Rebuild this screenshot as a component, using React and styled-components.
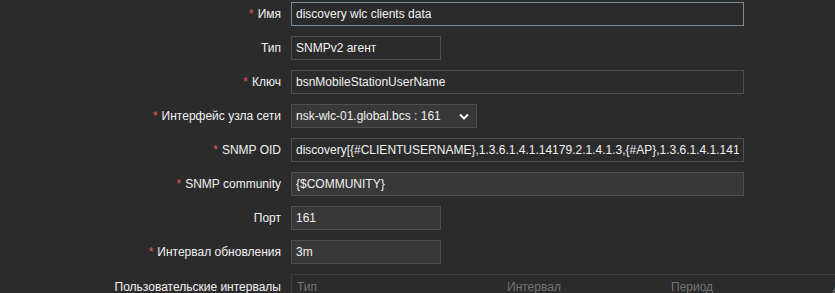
import styled, { createGlobalStyle } from "styled-components";

const fields = [
  { label: "Имя", required: true, value: "discovery wlc clients data", wide: true, focused: true, readOnly: true },
  { label: "Тип", value: "SNMPv2 агент", readOnly: true },
  { label: "Ключ", required: true, value: "bsnMobileStationUserName", wide: true, readOnly: true },
  { label: "Интерфейс узла сети", required: true, select: "nsk-wlc-01.global.bcs : 161" },
  {
    label: "SNMP OID",
    required: true,
    wide: true,
    readOnly: true,
    value:
      "discovery[{#CLIENTUSERNAME},1.3.6.1.4.1.14179.2.1.4.1.3,{#AP},1.3.6.1.4.1.14179.2.1.4.1.4]",
  },
  { label: "SNMP community", required: true, value: "{$COMMUNITY}", wide: true },
  { label: "Порт", value: "161" },
  { label: "Интервал обновления", required: true, value: "3m" },
];

const App = () => {
  return (
    <>
      <GlobalStyle />
      <Form>
        {fields.map(({ label, required, value, wide, focused, readOnly, select }) => (
          <Row key={label}>
            <Label>
              {required && <Star>*</Star>}
              {label}
            </Label>
            <Field>
              {select ? (
                <SelectBox>
                  <span>{select}</span>
                  <svg width="10" height="7" viewBox="0 0 10 7">
                    <polyline points="1,1.5 5,5.5 9,1.5" fill="none" stroke="#f2f2f2" strokeWidth="2" />
                  </svg>
                </SelectBox>
              ) : (
                <TextInput
                  value={value}
                  readOnly
                  $wide={wide}
                  $focused={focused}
                  $readOnly={readOnly}
                />
              )}
            </Field>
          </Row>
        ))}
        <Row $top>
          <Label $table>Пользовательские интервалы</Label>
          <Field>
            <IntervalTable>
              <HeadCell $w={210}>Тип</HeadCell>
              <HeadCell $w={164}>Интервал</HeadCell>
              <HeadCell $w={162}>Период</HeadCell>
              <HeadCell>Действие</HeadCell>
            </IntervalTable>
          </Field>
        </Row>
      </Form>
    </>
  );
};

const GlobalStyle = createGlobalStyle`
  html, body {
    margin: 0;
    background: #2b2b2b;
    overflow: hidden;
  }
  body {
    font-family: "Liberation Sans", Arial, sans-serif;
    font-size: 12px;
    color: #f2f2f2;
  }
`;

const Form = styled.div`
  display: flex;
  flex-direction: column;
  gap: 10px;
  padding-top: 2px;
  width: 835px;
  height: 293px;
  overflow: hidden;
`;

const Row = styled.div`
  display: grid;
  grid-template-columns: 281px 1fr;
  column-gap: 10px;
  align-items: ${({ $top }) => ($top ? "start" : "center")};
`;

const Label = styled.div`
  text-align: right;
  line-height: ${({ $table }) => ($table ? "26px" : "14px")};
  white-space: nowrap;
`;

const Star = styled.span`
  color: #e45959;
  margin-right: 4px;
`;

const Field = styled.div`
  display: flex;
  min-width: 0;
`;

const TextInput = styled.input`
  box-sizing: border-box;
  width: ${({ $wide }) => ($wide ? 453 : 150)}px;
  height: 24px;
  margin: 0;
  padding: 0 4px;
  font: inherit;
  color: #f2f2f2;
  background: ${({ $readOnly }) => ($readOnly ? "#2b2b2b" : "#383838")};
  border: 1px solid ${({ $focused }) => ($focused ? "#768d99" : "#4f4f4f")};
  border-radius: 0;
  outline: none;
`;

const SelectBox = styled.div`
  box-sizing: border-box;
  width: 186px;
  height: 24px;
  display: flex;
  align-items: center;
  justify-content: space-between;
  padding: 0 7px 0 4px;
  background: #383838;
  border: 1px solid #4f4f4f;
  white-space: nowrap;
`;

const IntervalTable = styled.div`
  display: flex;
  width: 600px;
  border: 1px solid #3d3d3d;
  border-right: none;
  border-bottom: none;
`;

const HeadCell = styled.div`
  box-sizing: border-box;
  flex: ${({ $w }) => ($w ? `0 0 ${$w}px` : "1")};
  padding: 0 5px;
  line-height: 25px;
  color: #737373;
  white-space: nowrap;
`;

export default App;
